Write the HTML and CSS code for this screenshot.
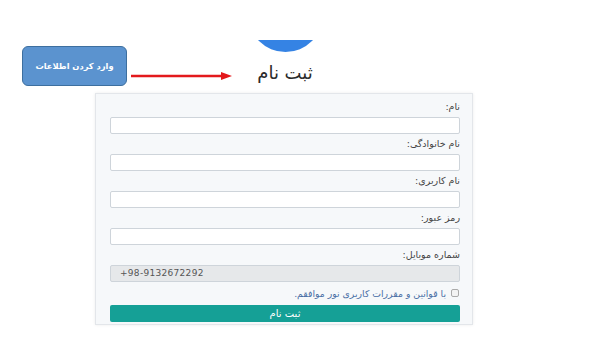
FILE: index.html
```html
<!DOCTYPE html>
<html lang="fa">
<head>
<meta charset="utf-8">
<link rel="stylesheet" href="styles.css">
</head>
<body>
<div class="page">
  <div class="callout">وارد کردن اطلاعات</div>
  <svg class="arrow" width="102" height="10" viewBox="0 0 102 10">
    <line x1="0" y1="5" x2="92" y2="5" stroke="#e3191c" stroke-width="2.4"/>
    <polygon points="90,1 101,5 90,9" fill="#e3191c"/>
  </svg>
  <main class="main">
    <header class="head">
      <div class="logo-clip"><div class="logo"></div></div>
      <h1 class="title">ثبت نام</h1>
    </header>
    <form class="card" dir="rtl">
      <div class="group">
        <label class="label">نام:</label>
        <div class="input"></div>
      </div>
      <div class="group">
        <label class="label">نام خانوادگی:</label>
        <div class="input"></div>
      </div>
      <div class="group">
        <label class="label">نام کاربری:</label>
        <div class="input"></div>
      </div>
      <div class="group">
        <label class="label">رمز عبور:</label>
        <div class="input"></div>
      </div>
      <div class="group">
        <label class="label">شماره موبایل:</label>
        <div class="input readonly" dir="ltr">+98-9132672292</div>
      </div>
      <div class="check-row">
        <span class="checkbox"></span>
        <span class="check-text">با قوانین و مقررات کاربری نور موافقم.</span>
      </div>
      <div class="button">ثبت نام</div>
    </form>
  </main>
</div>
</body>
</html>
```
FILE: styles.css
```css
* { box-sizing: border-box; }
html, body { margin: 0; padding: 0; background: #fff; }
body { font-family: "DejaVu Sans", "Noto Sans", sans-serif; width: 600px; height: 338px; overflow: hidden; }
.page { position: relative; width: 600px; height: 338px; }

.callout {
  position: absolute; left: 22px; top: 46px; width: 105px; height: 40px;
  background: #5b93cf; border: 1.5px solid #3d6f9f; border-radius: 6px;
  color: #fff; font-weight: bold; font-size: 8.3px;
  display: flex; align-items: center; justify-content: center;
  direction: rtl;
}
.arrow { position: absolute; left: 131px; top: 71px; }

.main { margin-left: 95px; width: 378px; display: flex; flex-direction: column; }
.head { display: flex; flex-direction: column; align-items: center; padding-top: 40px; padding-left: 2px; }
.logo-clip { width: 75px; height: 12px; overflow: hidden; }
.logo { width: 75px; height: 75px; border-radius: 50%; background: #3583e4; margin-top: -63px; }
.title { margin: 10px 0 9px; font-size: 18px; line-height: 22px; font-weight: normal; color: #2b2b2b; direction: rtl; }

.card {
  margin: 0; background: #f6f8fa; border: 1px solid #e3e6ea;
  box-shadow: 0 0 3px rgba(0,0,0,0.08);
  padding: 3px 12px 2px 14px; display: flex; flex-direction: column;
}
.group { display: flex; flex-direction: column; }
.label { font-size: 9.5px; line-height: 12px; padding-top: 4px; margin-bottom: 4px; color: #444; text-align: right; }
.input { height: 17px; background: #fff; border: 1px solid #ced4da; border-radius: 2px; }
.input.readonly { background: #e6e8ea; color: #555; font-size: 9px; line-height: 15px; padding-left: 9px; text-align: left; letter-spacing: 0.3px; }

.check-row { height: 22px; display: flex; align-items: center; gap: 5px; }
.checkbox { width: 8px; height: 8px; border: 1px solid #aaa; border-radius: 2px; background: #f3f3f3; margin-right: 1px; }
.check-text { font-size: 9.3px; color: #4a6fa5; }

.button {
  height: 17px; margin-top: 1px; background: #15a096; border-radius: 2px;
  color: #fff; font-size: 10px; display: flex; align-items: center; justify-content: center;
}
```
